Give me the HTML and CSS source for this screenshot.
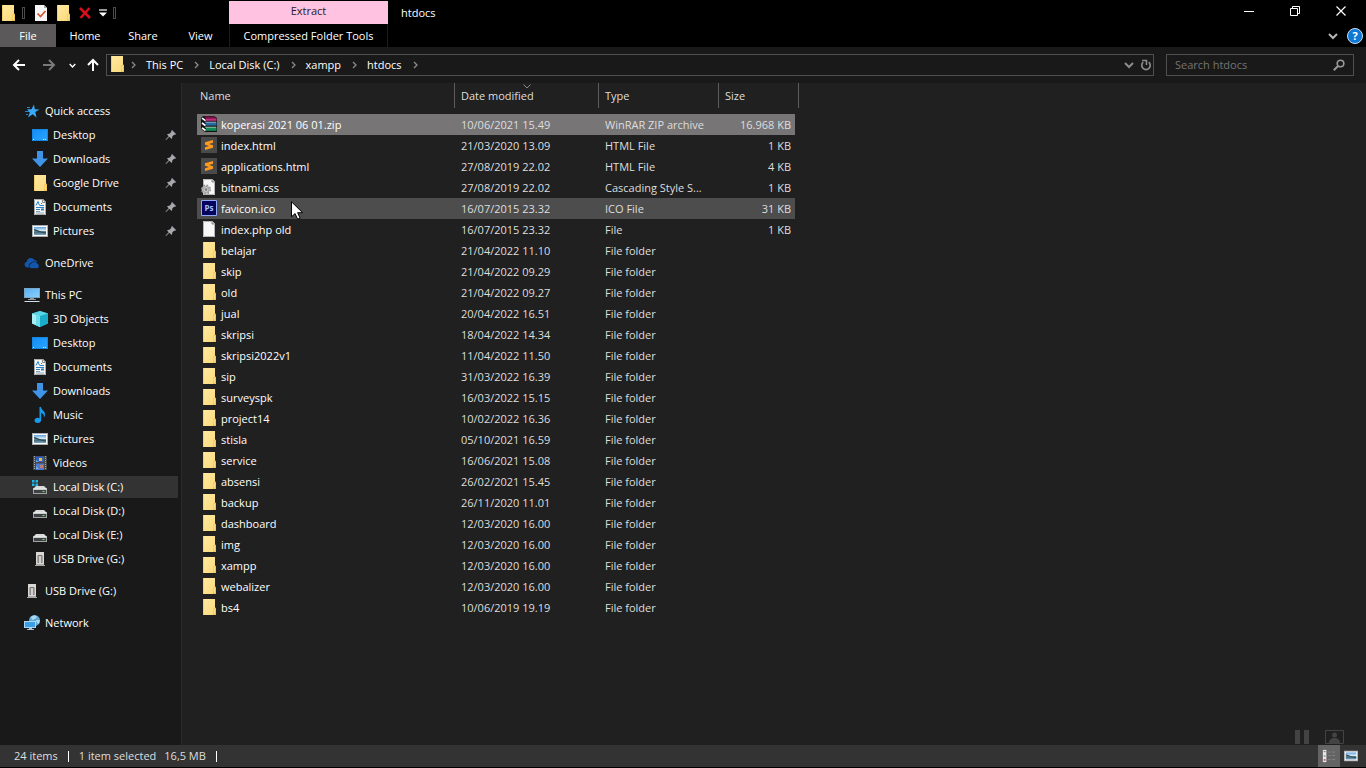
FILE: index.html
```html
<!DOCTYPE html>
<html lang="en">
<head>
<meta charset="utf-8">
<meta name="viewport" content="width=device-width, initial-scale=1">
<title>htdocs</title>
<link rel="stylesheet" href="styles.css">
</head>
<body>
<svg class="sprite" aria-hidden="true">
  <defs>
    <linearGradient id="g-folder" x1="0" y1="0" x2="1" y2="1"><stop offset="0" stop-color="#ffe9a2"/><stop offset="1" stop-color="#fbd978"/></linearGradient>
    <linearGradient id="g-screen" x1="0" y1="0" x2="1" y2="1"><stop offset="0" stop-color="#57b0f5"/><stop offset="1" stop-color="#8ecdfb"/></linearGradient>
    <linearGradient id="g-desk" x1="0" y1="0" x2="1" y2="1"><stop offset="0" stop-color="#0e8cf5"/><stop offset="1" stop-color="#2ea5ff"/></linearGradient>
    <linearGradient id="g-photo" x1="0" y1="0" x2="0" y2="1"><stop offset="0" stop-color="#5f9fe0"/><stop offset=".45" stop-color="#dcebf5"/><stop offset=".6" stop-color="#3c6270"/><stop offset="1" stop-color="#7da6c4"/></linearGradient>
    <symbol id="folder" viewBox="0 0 16 16"><path d="M2 0h12v8.500l1 .5v7H2z" fill="url(#g-folder)"/><path d="M12.500 9H15v7h-3v-2h.5z" fill="#f0c352"/><path d="M13 10h1v5h-1z" fill="#ffe08a"/><path d="M2 0h1v16H2z" fill="#f3cf6c"/></symbol>
    <symbol id="star" viewBox="0 0 16 16"><path d="M10 1.500l.8 4.700 4.700.4-4.200 2.500 1.200 5.400-3.800-3.200L4 14.500l1.800-5L3 6.300l4.500-.1z" fill="#38a9f5"/><path d="M3 4.500h3M1 8.500h4M2 11.500h2" stroke="#2387cf"/></symbol>
    <symbol id="desktop" viewBox="0 0 16 16"><path d="M0 2h16v12H0z" fill="url(#g-desk)"/><path d="M.5 2.500h15v11H.5z" fill="none" stroke="#1686e0"/><path d="M1 12.500h1M11 12.500h1M13 12.500h1" stroke="#d5edff"/></symbol>
    <symbol id="download" viewBox="0 0 16 16"><path d="M5 0h6v7.500h5L8 16 0 7.500h5z" fill="#3f94e8"/></symbol>
    <symbol id="document" viewBox="0 0 16 16"><path d="M2 0h9l3 3v13H2z" fill="#f4f5f6"/><path d="M2.500.5h8l3 3v12h-11z" fill="none" stroke="#a9acb0"/><path d="M10.500.5v3h3" fill="none" stroke="#8a8d91"/><path d="M4 6.500l2-4 1.500 4M9 4.500h1M8 6.500h4M4 8.500h8M4 10.500h4" stroke="#2f83c5" fill="none"/><path d="M9 9.500h3v2H9z" fill="#2685b8"/><path d="M4 12.500h4M4 14h8" stroke="#8fa2b0"/></symbol>
    <symbol id="picture" viewBox="0 0 16 16"><path d="M0 2h16v12H0z" fill="#a9adb1"/><path d="M1 3h14v10H1z" fill="#fafafa"/><path d="M2 4h12v8H2z" fill="url(#g-photo)"/><path d="M2 7.500l4 1.200 8 1.800V9.500L9 8.500 4 6.500l-2-.5z" fill="#2b4956"/></symbol>
    <symbol id="cloud" viewBox="0 0 16 16"><path d="M3 12.500a3 3 0 0 1-.4-5.800A4.300 4.300 0 0 1 10.500 5a3.600 3.600 0 0 1 2.800 2H9L5 9v3.500z" fill="#1257ad"/><path d="M7 13.500a2.400 2.400 0 0 1-.2-4.700 3.700 3.700 0 0 1 6.700-.2A2.600 2.600 0 0 1 13.500 13.500z" fill="#1257ad" stroke="#191919" stroke-width=".6"/></symbol>
    <symbol id="pc" viewBox="0 0 16 16"><path d="M0 1h16v10H0z" fill="#78a7c8"/><path d="M1 2h14v8H1z" fill="url(#g-screen)"/><path d="M6 11h4v1H6zM4 12h8v1H4z" fill="#8b98a1"/><path d="M1 14h14l1 1H0z" fill="#d5dde2"/></symbol>
    <symbol id="cube" viewBox="0 0 16 16"><path d="M8 0l8 2.500v10L8 16l-8-3.500v-10z" fill="#25b6d4"/><path d="M0 2.500L8 5v11l-8-3.500z" fill="#a8edf3"/><path d="M8 5l8-2.500v10L8 16z" fill="#1bacc9"/><path d="M8 0l8 2.500L8 5 0 2.500z" fill="#58d5e5"/><path d="M4 4l4 1v11l-4-1.800z" fill="#6bdce9"/></symbol>
    <symbol id="music" viewBox="0 0 16 16"><path d="M7.500 0H9c.2 3 4 3.800 4 7.200 0 1.500-.6 2.600-1.200 3.300.6-2.700-.8-4-2.600-4.800v7c0 2-1.500 3.300-3.500 3.300S2.500 15 2.500 13.500s1.500-2.700 3.200-2.700c.8 0 1.400.2 1.800.4z" fill="#169bea"/></symbol>
    <symbol id="video" viewBox="0 0 16 16"><path d="M1 1h14v14H1z" fill="#474747"/><path d="M2.500 1v14M13.500 1v14" stroke="#a8a8a8" stroke-dasharray="1 1"/><path d="M4 1.500h8V7H4z" fill="#315fbd"/><path d="M4 8.500h8V15H4z" fill="#4f79ca"/><path d="M7 3h3v3H7z" fill="#e5bf46"/><path d="M4 5l3 2H4zM4 11l3 3H4z" fill="#73b1e8"/><path d="M8 10h3v3H8z" fill="#c07b70"/></symbol>
    <symbol id="drive" viewBox="0 0 16 16"><path d="M4 7h8l3 3H1z" fill="#d7d9da"/><path d="M1 10h14v5H1z" fill="#a1a4a6"/><path d="M2 11h12v3H2z" fill="#3d4143"/><path d="M10.500 12.500h2" stroke="#6ee36b"/><path d="M1 10h14" stroke="#f2f2f2"/></symbol>
    <symbol id="sysdrive" viewBox="0 0 16 16"><use href="#drive"/><path d="M0 1h2.500v2.500H0zM3.500 1H6v2.500H3.500zM0 4.500h2.500V7H0zM3.500 4.500H6V7H3.500z" fill="#20b8e8"/></symbol>
    <symbol id="usb" viewBox="0 0 16 16"><path d="M4 1h8v12H4z" fill="#d9d8d6"/><path d="M6 12V4.500h4V12" fill="#aaa9a6" stroke="#77736e"/><path d="M8 5v7" stroke="#f6f6f4"/><path d="M4 13h8v1h1v1H3v-1h1z" fill="#aaa9a8"/></symbol>
    <symbol id="network" viewBox="0 0 16 16"><circle cx="10.500" cy="5.500" r="5.500" fill="#5fa7d3"/><path d="M7 2c2-2 5-2 6 0l-2 2-3 1zM12 5l4 0-1 4-2-1z" fill="#a9d9ef"/><path d="M0 6h12v7H0z" fill="#a8d9f6"/><path d="M1 7h10v5H1z" fill="#3d9ee4"/><path d="M5 13h3v1h2v1H3v-1h2z" fill="#a9c3d2"/></symbol>
    <symbol id="pin" viewBox="0 0 12 12"><path d="M7 1l4 4-1 .9-.7-.4-2 2c.1 1-.2 1.800-.8 2.500L4.300 7.800 1 11l-.5-.5L3.700 7.200 2 5.500c.7-.6 1.500-.9 2.500-.8l2-2L6.100 2z" fill="#a9a9ad"/></symbol>
    <symbol id="rar" viewBox="0 0 16 16"><path d="M2 0h11l3 2v14H4L0 13V2z" fill="#151515"/><path d="M2.500.5H13l2.500 2H5z" fill="#7c1246"/><path d="M5 2.500h10.500v2.300H5z" fill="#c22c7c"/><path d="M4 5.800h11l.5 1H4.500z" fill="#8fc9ee"/><path d="M5 7h10.500v2.600H5z" fill="#2468a4"/><path d="M4 10.800h11l.5 1H4.500z" fill="#9be3bd"/><path d="M5 12h10.500v2.800H5z" fill="#118e56"/><path d="M1 2.200l3.500 2.500M1 7l3.500 2.500M1 11.800l3.500 2.700" stroke="#fff" stroke-width="1.600"/></symbol>
    <symbol id="sublime" viewBox="0 0 16 16"><path d="M0 0h16v16H0z" fill="#4a4a4a"/><path d="M12 3v2.700L8 7l4 1.200v2.500L4 13v-2.700L8 9 4 7.700V5.200z" fill="#ff9a1c"/></symbol>
    <symbol id="page" viewBox="0 0 16 16"><path d="M2 0h9l3 3v13H2z" fill="#f7f7f7"/><path d="M11 0v3h3" fill="#c8c8c8" stroke="#888"/><path d="M2.500.5h8.500l2.500 2.500v12.500h-11z" fill="none" stroke="#b5b5b5"/></symbol>
    <symbol id="gearpage" viewBox="0 0 16 16"><use href="#page"/><circle cx="5" cy="10.500" r="4.300" fill="#ccc" stroke="#939393" stroke-width="1.500" stroke-dasharray="1.700 1.680"/><circle cx="5" cy="10.500" r="3" fill="#c9c9c9" stroke="#a0a0a0"/><circle cx="5" cy="10.500" r="1.200" fill="#777"/></symbol>
    <symbol id="ps" viewBox="0 0 16 16"><path d="M.5.500h15v15H.5z" fill="#04045e" stroke="#90a9f7"/><text x="8" y="11" text-anchor="middle" class="ps-text">Ps</text></symbol>
    <symbol id="check" viewBox="0 0 16 16"><path d="M2 0h9l3 3v13H2z" fill="#f6f6f8"/><path d="M11 0v3h3" fill="#aaa"/><path d="M4.500 8.500l3 3 5-5.500" fill="none" stroke="#d65532" stroke-width="1.700"/></symbol>
    <symbol id="chev" viewBox="0 0 10 10"><path d="M1 3l4 4 4-4" fill="none" stroke="currentColor" stroke-width="2"/></symbol>
    <symbol id="crumb" viewBox="0 0 6 8"><path d="M1 1l3 3-3 3" fill="none" stroke="currentColor" stroke-width="1.300"/></symbol>
    <symbol id="arrow" viewBox="0 0 14 12"><path d="M13 6H2M7 1L2 6l5 5" fill="none" stroke="currentColor" stroke-width="2"/></symbol>
  </defs>
</svg>

<div class="window">
  <header class="titlebar">
    <div class="quickbar">
      <svg class="icon"><use href="#folder"/></svg>
      <span class="grip"></span>
      <button class="plain check-btn" aria-label="Properties"><svg class="icon"><use href="#check"/></svg></button>
      <button class="plain" aria-label="New folder"><svg class="icon"><use href="#folder"/></svg></button>
      <button class="plain" aria-label="Delete"><svg class="cross" viewBox="0 0 12 12"><path d="M1 1l10 10M10.500 1L1.500 11" stroke="#d5101c" stroke-width="2.600"/></svg></button>
      <button class="plain more-btn" aria-label="Customize toolbar"><svg class="more" viewBox="0 0 8 8"><path d="M0 1h8" stroke="#fff" stroke-width="1.200"/><path d="M0 3.500h8L4 7.500z" fill="#fff"/></svg></button>
      <span class="grip"></span>
    </div>
    <button class="context-tab">Extract</button>
    <h1 class="title">htdocs</h1>
    <div class="controls">
      <button class="plain" aria-label="Minimize"><svg viewBox="0 0 10 10"><path d="M0 5.500h10" stroke="#fff"/></svg></button>
      <button class="plain" aria-label="Restore"><svg viewBox="0 0 10 10"><path d="M.5 2.500h7v7h-7zM2.500 2V.5h7v7H8" fill="none" stroke="#fff"/></svg></button>
      <button class="plain" aria-label="Close"><svg viewBox="0 0 10 10"><path d="M.5.500l9 9M9.500.500l-9 9" stroke="#fff" stroke-width="1.200"/></svg></button>
    </div>
  </header>

  <nav class="tabs">
    <button class="tab file">File</button>
    <button class="tab">Home</button>
    <button class="tab">Share</button>
    <button class="tab view">View</button>
    <button class="tab tools">Compressed Folder Tools</button>
    <div class="tabs-end">
      <button class="plain" aria-label="Expand ribbon"><svg class="chev"><use href="#chev"/></svg></button>
      <button class="help" aria-label="Help">?</button>
    </div>
  </nav>

  <div class="navbar">
    <div class="history">
      <button class="plain" aria-label="Back"><svg class="arrow"><use href="#arrow"/></svg></button>
      <button class="plain forward" aria-label="Forward"><svg class="arrow"><use href="#arrow"/></svg></button>
      <button class="plain recent" aria-label="Recent locations"><svg class="recent-icon"><use href="#chev"/></svg></button>
      <button class="plain" aria-label="Up"><svg class="up" viewBox="0 0 12 14"><path d="M6 13V2M1 7l5-5 5 5" fill="none" stroke="#fff" stroke-width="2"/></svg></button>
    </div>
    <div class="address">
      <svg class="icon"><use href="#folder"/></svg>
      <svg class="crumb"><use href="#crumb"/></svg><a href="#">This PC</a>
      <svg class="crumb"><use href="#crumb"/></svg><a href="#">Local Disk (C:)</a>
      <svg class="crumb"><use href="#crumb"/></svg><a href="#">xampp</a>
      <svg class="crumb"><use href="#crumb"/></svg><a href="#">htdocs</a>
      <svg class="crumb"><use href="#crumb"/></svg>
      <div class="address-end">
        <button class="plain" aria-label="Previous locations"><svg class="chev"><use href="#chev"/></svg></button>
        <button class="plain" aria-label="Refresh"><svg class="refresh" viewBox="0 0 12 12"><path d="M8.800 3.200A4.200 4.200 0 1 1 3.200 3.200" fill="none" stroke="currentColor" stroke-width="1.700"/><path d="M2 1.500h4.500V6" fill="none" stroke="currentColor" stroke-width="1.600"/></svg></button>
      </div>
    </div>
    <form class="search">
      <input type="text" placeholder="Search htdocs" aria-label="Search htdocs">
      <button class="plain" type="button" aria-label="Search"><svg class="lens" viewBox="0 0 12 12"><circle cx="7.500" cy="4.500" r="3.300" fill="none" stroke="currentColor" stroke-width="1.600"/><path d="M5 7L.8 11.200" stroke="currentColor" stroke-width="2"/></svg></button>
    </form>
  </div>

  <div class="body">
    <aside class="sidebar">
      <section class="group">
        <a class="node" href="#"><svg class="icon"><use href="#star"/></svg>Quick access</a>
        <a class="node child" href="#"><svg class="icon"><use href="#desktop"/></svg>Desktop<svg class="pin"><use href="#pin"/></svg></a>
        <a class="node child" href="#"><svg class="icon"><use href="#download"/></svg>Downloads<svg class="pin"><use href="#pin"/></svg></a>
        <a class="node child" href="#"><svg class="icon"><use href="#folder"/></svg>Google Drive<svg class="pin"><use href="#pin"/></svg></a>
        <a class="node child" href="#"><svg class="icon"><use href="#document"/></svg>Documents<svg class="pin"><use href="#pin"/></svg></a>
        <a class="node child" href="#"><svg class="icon"><use href="#picture"/></svg>Pictures<svg class="pin"><use href="#pin"/></svg></a>
      </section>
      <section class="group">
        <a class="node" href="#"><svg class="icon"><use href="#cloud"/></svg>OneDrive</a>
      </section>
      <section class="group">
        <a class="node" href="#"><svg class="icon"><use href="#pc"/></svg>This PC</a>
        <a class="node child" href="#"><svg class="icon"><use href="#cube"/></svg>3D Objects</a>
        <a class="node child" href="#"><svg class="icon"><use href="#desktop"/></svg>Desktop</a>
        <a class="node child" href="#"><svg class="icon"><use href="#document"/></svg>Documents</a>
        <a class="node child" href="#"><svg class="icon"><use href="#download"/></svg>Downloads</a>
        <a class="node child" href="#"><svg class="icon"><use href="#music"/></svg>Music</a>
        <a class="node child" href="#"><svg class="icon"><use href="#picture"/></svg>Pictures</a>
        <a class="node child" href="#"><svg class="icon"><use href="#video"/></svg>Videos</a>
        <a class="node child current" href="#"><svg class="icon"><use href="#sysdrive"/></svg>Local Disk (C:)</a>
        <a class="node child" href="#"><svg class="icon"><use href="#drive"/></svg>Local Disk (D:)</a>
        <a class="node child" href="#"><svg class="icon"><use href="#drive"/></svg>Local Disk (E:)</a>
        <a class="node child" href="#"><svg class="icon"><use href="#usb"/></svg>USB Drive (G:)</a>
      </section>
      <section class="group">
        <a class="node" href="#"><svg class="icon"><use href="#usb"/></svg>USB Drive (G:)</a>
      </section>
      <section class="group">
        <a class="node" href="#"><svg class="icon"><use href="#network"/></svg>Network</a>
      </section>
    </aside>

    <main class="files">
      <table>
        <colgroup><col class="c-name"><col class="c-date"><col class="c-type"><col class="c-size"></colgroup>
        <thead>
          <tr>
            <th><button class="sort">Name</button></th>
            <th><button class="sort">Date modified<svg class="sort-mark" viewBox="0 0 8 5"><path d="M.5.500L4 4 7.500.500" fill="none" stroke="#8a8a8a"/></svg></button></th>
            <th><button class="sort">Type</button></th>
            <th><button class="sort">Size</button></th>
          </tr>
        </thead>
        <tbody>
          <tr class="selected"><td><svg class="icon"><use href="#rar"/></svg>koperasi 2021 06 01.zip</td><td>10/06/2021 15.49</td><td>WinRAR ZIP archive</td><td>16.968 KB</td></tr>
          <tr><td><svg class="icon"><use href="#sublime"/></svg>index.html</td><td>21/03/2020 13.09</td><td>HTML File</td><td>1 KB</td></tr>
          <tr><td><svg class="icon"><use href="#sublime"/></svg>applications.html</td><td>27/08/2019 22.02</td><td>HTML File</td><td>4 KB</td></tr>
          <tr><td><svg class="icon"><use href="#gearpage"/></svg>bitnami.css</td><td>27/08/2019 22.02</td><td>Cascading Style S...</td><td>1 KB</td></tr>
          <tr class="hovered"><td><svg class="icon"><use href="#ps"/></svg>favicon.ico</td><td>16/07/2015 23.32</td><td>ICO File</td><td>31 KB</td></tr>
          <tr><td><svg class="icon"><use href="#page"/></svg>index.php old</td><td>16/07/2015 23.32</td><td>File</td><td>1 KB</td></tr>
          <tr><td><svg class="icon"><use href="#folder"/></svg>belajar</td><td>21/04/2022 11.10</td><td>File folder</td><td></td></tr>
          <tr><td><svg class="icon"><use href="#folder"/></svg>skip</td><td>21/04/2022 09.29</td><td>File folder</td><td></td></tr>
          <tr><td><svg class="icon"><use href="#folder"/></svg>old</td><td>21/04/2022 09.27</td><td>File folder</td><td></td></tr>
          <tr><td><svg class="icon"><use href="#folder"/></svg>jual</td><td>20/04/2022 16.51</td><td>File folder</td><td></td></tr>
          <tr><td><svg class="icon"><use href="#folder"/></svg>skripsi</td><td>18/04/2022 14.34</td><td>File folder</td><td></td></tr>
          <tr><td><svg class="icon"><use href="#folder"/></svg>skripsi2022v1</td><td>11/04/2022 11.50</td><td>File folder</td><td></td></tr>
          <tr><td><svg class="icon"><use href="#folder"/></svg>sip</td><td>31/03/2022 16.39</td><td>File folder</td><td></td></tr>
          <tr><td><svg class="icon"><use href="#folder"/></svg>surveyspk</td><td>16/03/2022 15.15</td><td>File folder</td><td></td></tr>
          <tr><td><svg class="icon"><use href="#folder"/></svg>project14</td><td>10/02/2022 16.36</td><td>File folder</td><td></td></tr>
          <tr><td><svg class="icon"><use href="#folder"/></svg>stisla</td><td>05/10/2021 16.59</td><td>File folder</td><td></td></tr>
          <tr><td><svg class="icon"><use href="#folder"/></svg>service</td><td>16/06/2021 15.08</td><td>File folder</td><td></td></tr>
          <tr><td><svg class="icon"><use href="#folder"/></svg>absensi</td><td>26/02/2021 15.45</td><td>File folder</td><td></td></tr>
          <tr><td><svg class="icon"><use href="#folder"/></svg>backup</td><td>26/11/2020 11.01</td><td>File folder</td><td></td></tr>
          <tr><td><svg class="icon"><use href="#folder"/></svg>dashboard</td><td>12/03/2020 16.00</td><td>File folder</td><td></td></tr>
          <tr><td><svg class="icon"><use href="#folder"/></svg>img</td><td>12/03/2020 16.00</td><td>File folder</td><td></td></tr>
          <tr><td><svg class="icon"><use href="#folder"/></svg>xampp</td><td>12/03/2020 16.00</td><td>File folder</td><td></td></tr>
          <tr><td><svg class="icon"><use href="#folder"/></svg>webalizer</td><td>12/03/2020 16.00</td><td>File folder</td><td></td></tr>
          <tr><td><svg class="icon"><use href="#folder"/></svg>bs4</td><td>10/06/2019 19.19</td><td>File folder</td><td></td></tr>
        </tbody>
      </table>
    </main>
  </div>

  <footer class="status">
    <span>24 items</span><span class="bar"></span>
    <span>1 item selected</span><span class="bytes">16,5 MB</span><span class="bar last"></span>
    <div class="views">
      <button class="plain details" aria-label="Details view"><svg viewBox="0 0 16 16"><path d="M1 1h4v14H1z" fill="#e8e8e8"/><path d="M2 3h2M2 8h2" stroke="#4d5a66"/><path d="M2 12.500h2" stroke="#a03030" stroke-width="1.500"/><path d="M7 3.500h3M11.500 3.500H15M7 7.500h3M11.500 7.500H15M7 12h3M11.500 12H15" stroke="#858585"/></svg></button>
      <button class="plain" aria-label="Large icons view"><svg class="large"><use href="#picture"/></svg></button>
    </div>
  </footer>

  <div class="recorder" aria-hidden="true">
    <svg viewBox="0 0 50 16"><path d="M0 1h5v14H0zM9 1h5v14H9z" fill="#434343"/><path d="M30.500 1.500h18v13h-18z" fill="none" stroke="#434343"/><circle cx="39.500" cy="6" r="2.500" fill="#434343"/><path d="M34 14c0-4 3-5 5.500-5s5.500 1 5.500 5z" fill="#434343"/></svg>
  </div>
  <svg class="cursor" viewBox="0 0 13 19" aria-hidden="true"><path d="M.5.800v15l3.600-3.200 2.500 5.600 2.500-1.100-2.500-5.400h5z" fill="#fff" stroke="#000"/></svg>
</div>
</body>
</html>
```
FILE: styles.css
```css
* { box-sizing: border-box; }
html, body { height: 100%; }
body {
  margin: 0;
  background: #000;
  color: #fff;
  font: 11px/16px "Open Sans", "Noto Sans", sans-serif;
}
button, input { font: inherit; color: inherit; }
button { border: 0; background: none; padding: 0; }
a { color: inherit; text-decoration: none; }
svg { display: block; flex: none; }
.sprite { position: absolute; width: 0; height: 0; }
.icon { width: 16px; height: 16px; }
.plain { display: flex; align-items: center; justify-content: center; }
.ps-text { font: 700 8px "Open Sans", sans-serif; fill: #a6c2ff; }

.window {
  position: relative;
  min-height: 100vh;
  display: flex;
  flex-direction: column;
  padding-bottom: 1px;
}

.titlebar { display: flex; height: 24px; }
.quickbar { width: 229px; display: flex; align-items: center; padding-top: 2px; }
.grip { width: 3px; height: 12px; border: 1px solid #4c4c4c; margin: 0 6px; }
.check-btn { margin-right: 6px; margin-left: 2px; }
.cross { width: 12px; height: 12px; margin-left: 8px; }
.more { width: 8px; height: 8px; }
.more-btn { margin-left: 8px; }
.context-tab {
  width: 159px;
  margin-top: 1px;
  padding-bottom: 3px;
  background: #ffc3e1;
  color: #2a1a24;
}
.title { margin: 0; padding: 5px 13px 0; font-size: 11px; font-weight: 400; line-height: 16px; }
.controls { margin-left: auto; display: flex; padding: 0 2px 2px 0; }
.controls button { width: 46px; }
.controls svg { width: 10px; height: 10px; }

.tabs { display: flex; height: 23px; }
.tab { width: 58px; }
.tab.file { width: 56px; background: #5b5959; }
.tab.view { width: 57px; }
.tab.tools { width: 159px; border: solid #1c1c1c; border-width: 0 1px; }
.tabs-end { margin-left: auto; display: flex; align-items: center; gap: 9px; padding-right: 3px; color: #b5b5b5; }
.chev { width: 10px; height: 10px; }
.help {
  width: 16px;
  height: 16px;
  border: 1px solid #c8e3fa;
  border-radius: 50%;
  background: #0f78d4;
  color: #fff;
  font-weight: 700;
  line-height: 14px;
}

.navbar { display: flex; height: 36px; padding: 7px 12px 7px 0; background: #191919; }
.history { width: 106px; display: flex; align-items: center; padding-left: 12px; }
.arrow { width: 14px; height: 12px; }
.forward { color: #7a7a7a; margin-left: 16px; }
.forward .arrow { transform: scaleX(-1); }
.recent { margin-left: 13px; }
.recent-icon { width: 7px; height: 7px; }
.up { width: 12px; height: 14px; }
.history button:last-child { margin-left: 11px; }
.address {
  flex: 1;
  display: flex;
  align-items: center;
  border: 1px solid #4f4f4f;
  padding-left: 2px;
}
.address a { margin: 0 11px 0 9px; }
.crumb { width: 6px; height: 8px; color: #8c8c8c; }
.address .icon { margin: 0 6px 2px 0; }
.address-end { margin-left: auto; display: flex; gap: 6px; padding-right: 1px; color: #8c8c8c; }
.refresh { width: 12px; height: 12px; }
.search {
  width: 188px;
  margin-left: 12px;
  display: flex;
  align-items: center;
  border: 1px solid #4f4f4f;
  padding-right: 8px;
  color: #9a9a9a;
}
.search input { flex: 1; min-width: 0; border: 0; padding: 0 8px; background: none; outline: 0; }
.search input::placeholder { color: #747474; opacity: 1; }
.lens { width: 12px; height: 12px; }

.body { flex: 1; display: flex; background: #202020; }
.sidebar { width: 182px; padding: 17px 3px 0 0; background: #191919; border-right: 1px solid #2b2b2b; }
.group { display: flex; flex-direction: column; gap: 2px; margin-bottom: 10px; }
.node { display: flex; align-items: center; gap: 5px; height: 22px; padding-left: 24px; }
.node.child { padding-left: 32px; }
.node.current { background: #333; }
.pin { width: 12px; height: 12px; margin-left: auto; margin-right: 1px; }

.files { flex: 1; padding-left: 15px; }
table { width: 602px; table-layout: fixed; border-collapse: separate; border-spacing: 0; }
.c-name { width: 258px; }
.c-date { width: 144px; }
.c-type { width: 120px; }
.c-size { width: 80px; }
th { height: 31px; padding: 0; vertical-align: top; font-weight: 400; }
.sort {
  position: relative;
  display: block;
  width: 100%;
  height: 25px;
  padding: 1px 6px 0;
  border-right: 1px solid #5c5c5c;
  color: #dedede;
  text-align: left;
}
th:first-child .sort { padding-left: 3px; }
.sort-mark { position: absolute; top: 1px; left: calc(50% - 4px); width: 8px; height: 5px; }
td { height: 21px; padding: 0 6px; color: #dedede; white-space: nowrap; background-clip: padding-box; }
td:first-child { display: flex; align-items: center; gap: 4px; padding-left: 4px; color: #fff; }
td:last-child { padding-right: 4px; border-right: 4px solid transparent; text-align: right; }
td .icon { margin-bottom: 2px; }
.selected td { background-color: #777576; }
.hovered td { background-color: #4d4d4d; }

.status { display: flex; align-items: center; height: 22px; padding-left: 14px; background: #333; color: #dedede; }
.bar { width: 1px; height: 11px; margin: 0 10px; background: #fff; }
.bytes { margin-left: 8px; }
.views { margin-left: auto; display: flex; align-self: stretch; padding-right: 4px; }
.views .plain { width: 22px; }
.views svg { width: 16px; height: 14px; }
.views .details { background: #646464; }

.recorder { position: absolute; right: 21px; bottom: 23px; width: 50px; }
.recorder svg { width: 50px; height: 16px; }
.cursor { position: absolute; left: 291px; top: 201px; width: 13px; height: 19px; }
```
